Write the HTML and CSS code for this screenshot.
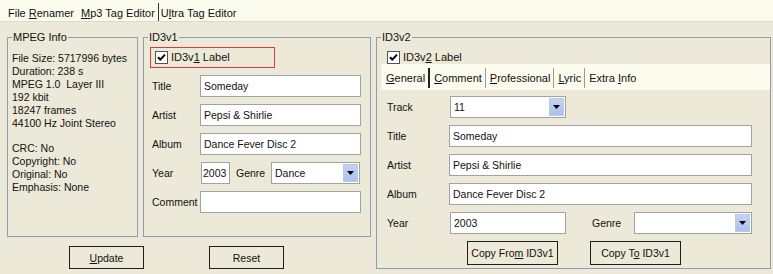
FILE: index.html
```html
<!DOCTYPE html>
<html>
  <head>
    <meta charset="utf-8" />
    <title>Mp3 Tag Editor</title>
    <link rel="stylesheet" href="styles.css">
  </head>
  <body>
    <div class="tabs">
      <span class="tab">File <u>R</u>enamer</span>
      <span class="tab active"><u>M</u>p3 Tag Editor</span>
      <span class="tab">U<u>l</u>tra Tag Editor</span>
    </div>

    <div class="main">
      <div class="left">
        <div class="left-groups">
          <!-- MPEG info box -->
          <fieldset class="group mpeg">
            <legend>MPEG Info</legend>
            <div class="info">
              <div>File Size: 5717996 bytes</div>
              <div>Duration: 238 s</div>
              <div>MPEG 1.0&nbsp; Layer III</div>
              <div>192 kbit</div>
              <div>18247 frames</div>
              <div>44100 Hz Joint Stereo</div>
              <div class="gap">CRC: No</div>
              <div>Copyright: No</div>
              <div>Original: No</div>
              <div>Emphasis: None</div>
            </div>
          </fieldset>

          <!-- ID3v1 box -->
          <fieldset class="group id3v1">
            <legend>ID3v1</legend>
            <label class="check focused">
              <svg width="13" height="13" viewBox="0 0 13 13"><rect x="0.5" y="0.5" width="12" height="12" fill="#fff" stroke="#555"/><path d="M3 6.2 L5.3 8.6 L10 3.6" stroke="#000" stroke-width="2" fill="none"/></svg>
              <span>ID3v<u>1</u> Label</span>
            </label>
            <div class="form1">
              <span>Title</span><input type="text" value="Someday" />
              <span>Artist</span><input type="text" value="Pepsi &amp; Shirlie" />
              <span>Album</span><input type="text" value="Dance Fever Disc 2" />
              <span>Year</span>
              <div class="year-row">
                <input type="text" class="year1" value="2003" />
                <span class="genre-label">Genre</span>
                <div class="combo genre1">
                  <span class="combo-text">Dance</span>
                  <span class="arrow"><svg width="7" height="4" viewBox="0 0 7 4"><path d="M0 0 H7 L3.5 4 Z" fill="#000"/></svg></span>
                </div>
              </div>
              <span>Comment</span><input type="text" value="" />
            </div>
          </fieldset>
        </div>

        <div class="left-buttons">
          <button type="button" class="btn update"><u>U</u>pdate</button>
          <button type="button" class="btn reset">Reset</button>
        </div>
      </div>

      <!-- ID3v2 box -->
      <fieldset class="group id3v2">
        <legend>ID3v2</legend>
        <label class="check v2">
          <svg width="13" height="13" viewBox="0 0 13 13"><rect x="0.5" y="0.5" width="12" height="12" fill="#fff" stroke="#555"/><path d="M3 6.2 L5.3 8.6 L10 3.6" stroke="#000" stroke-width="2" fill="none"/></svg>
          <span>ID3v<u>2</u> Label</span>
        </label>

        <div class="subtabs">
          <span class="subtab"><u>G</u>eneral</span><span class="sep dark"></span>
          <span class="subtab"><u>C</u>omment</span><span class="sep"></span>
          <span class="subtab"><u>P</u>rofessional</span><span class="sep"></span>
          <span class="subtab"><u>L</u>yric</span><span class="sep"></span>
          <span class="subtab">Extra <u>I</u>nfo</span>
        </div>

        <div class="form2">
          <span>Track</span>
          <div class="combo track">
            <span class="combo-text">11</span>
            <span class="arrow"><svg width="7" height="4" viewBox="0 0 7 4"><path d="M0 0 H7 L3.5 4 Z" fill="#000"/></svg></span>
          </div>
          <span>Title</span><input type="text" class="wide" value="Someday" />
          <span>Artist</span><input type="text" class="wide" value="Pepsi &amp; Shirlie" />
          <span>Album</span><input type="text" class="wide" value="Dance Fever Disc 2" />
          <span>Year</span>
          <div class="year-row2">
            <input type="text" class="year2" value="2003" />
            <span class="genre-label2">Genre</span>
            <div class="combo genre2">
              <span class="combo-text"></span>
              <span class="arrow"><svg width="7" height="4" viewBox="0 0 7 4"><path d="M0 0 H7 L3.5 4 Z" fill="#000"/></svg></span>
            </div>
          </div>
        </div>

        <div class="copy-buttons">
          <button type="button" class="btn copy">Copy Fro<u>m</u> ID3v1</button>
          <button type="button" class="btn copy">Copy T<u>o</u> ID3v1</button>
        </div>
      </fieldset>
    </div>
  </body>
</html>
```

FILE: styles.css
```css
body {
  margin: 0;
  width: 773px;
  height: 274px;
  overflow: hidden;
  background-color: #ece9d8;
  font: 10.5px "Liberation Sans", Arial, sans-serif;
  color: #111;
}

u {
  text-decoration: underline;
}

/* top tab bar */
.tabs {
  height: 22px;
  box-sizing: border-box;
  display: flex;
  align-items: stretch;
  padding: 3px 0 0 6px;
  background-color: #fbfbee;
  border-bottom: 1px solid #dcdac8;
  font-size: 11px;
}

.tab {
  line-height: 14px;
  padding: 3px 3px 0 2px;
}

.tab.active {
  margin-left: 2px;
  border-right: 1px solid #333;
  padding-right: 3px;
}

.main {
  display: flex;
  gap: 5px;
  padding: 9px 0 0 7px;
}

/* group boxes */
.group {
  margin: 0;
  padding: 0;
  min-width: 0;
  box-sizing: border-box;
  border: 1px solid #8e9db4;
}

.group legend {
  padding: 0 1px;
  margin-left: 4px;
  line-height: 13px;
  font-size: 11px;
}

.left-groups {
  display: flex;
  gap: 5px;
}

.mpeg {
  width: 131px;
  height: 206px;
}

.info {
  padding: 8px 0 0 4px;
  line-height: 13px;
  white-space: nowrap;
}

.info .gap {
  margin-top: 12px;
}

.id3v1 {
  width: 228px;
  height: 206px;
}

/* checkbox labels */
.check {
  display: flex;
  align-items: center;
  gap: 3px;
  line-height: 13px;
  font-size: 11px;
}

.check.focused {
  width: 125px;
  height: 21px;
  box-sizing: border-box;
  margin: 3px 0 0 6px;
  padding-left: 4px;
  border: 1px solid #e0363c;
}

.check.v2 {
  margin: 7px 0 0 10px;
}

/* form rows */
input[type="text"] {
  height: 22px;
  box-sizing: border-box;
  margin: 0;
  padding: 0 3px;
  border: 1px solid #a2a2a0;
  background: #fff;
  font: inherit;
  color: #111;
  outline: none;
}

.form1 {
  display: grid;
  grid-template-columns: 48px 161px;
  row-gap: 7px;
  align-items: center;
  padding-left: 8px;
  margin-top: 7px;
}

.year-row {
  display: flex;
  align-items: center;
}

.year1 {
  width: 29px;
  margin-left: 1px !important;
  padding: 0 1px !important;
}

.genre-label {
  margin-left: 6px;
  width: 35px;
}

.combo {
  height: 22px;
  box-sizing: border-box;
  display: flex;
  align-items: stretch;
  background: #fff;
  border: 1px solid #a2a2a0;
  padding: 1px;
}

.combo-text {
  flex: 1;
  padding-left: 2px;
  line-height: 18px;
}

.arrow {
  width: 15px;
  display: flex;
  align-items: center;
  justify-content: center;
  background: linear-gradient(#c5d3f3, #adc1ee);
  border: 1px solid #b8c8ee;
  box-sizing: border-box;
}

.genre1 {
  width: 89px;
}

.left-buttons {
  display: flex;
  gap: 65px;
  padding: 9px 0 0 62px;
}

.btn {
  margin: 0;
  padding: 0;
  height: 23px;
  box-sizing: border-box;
  background-color: #ece9d8;
  border: 1px solid #1e1e1e;
  font: inherit;
  color: #111;
}

.update, .reset {
  width: 75px;
}

/* ID3v2 */
.id3v2 {
  width: 395px;
  height: 238px;
}

.subtabs {
  display: flex;
  align-items: center;
  height: 26px;
  margin: 0 0 0 4px;
  padding-left: 5px;
  background-color: #fbfbee;
  font-size: 11px;
}

.subtab {
  line-height: 14px;
  padding-top: 2px;
}

.sep {
  width: 1px;
  height: 20px;
  margin: 2px 4px 0 3px;
  background-color: #9a9a9a;
}

.sep.dark {
  width: 2px;
  background-color: #222;
}

.form2 {
  display: grid;
  grid-template-columns: 62px 303px;
  row-gap: 7px;
  align-items: center;
  padding-left: 10px;
  margin-top: 6px;
}

.track {
  width: 116px;
  margin-left: 1px;
}

.year-row2 {
  display: flex;
  align-items: center;
}

.year2 {
  width: 116px;
  margin-left: 1px !important;
}

.genre-label2 {
  margin-left: 26px;
  width: 42px;
}

.genre2 {
  width: 118px;
}

.copy-buttons {
  display: flex;
  gap: 32px;
  padding: 7px 0 0 90px;
}

.btn.copy {
  width: 91px;
  height: 24px;
}
```
